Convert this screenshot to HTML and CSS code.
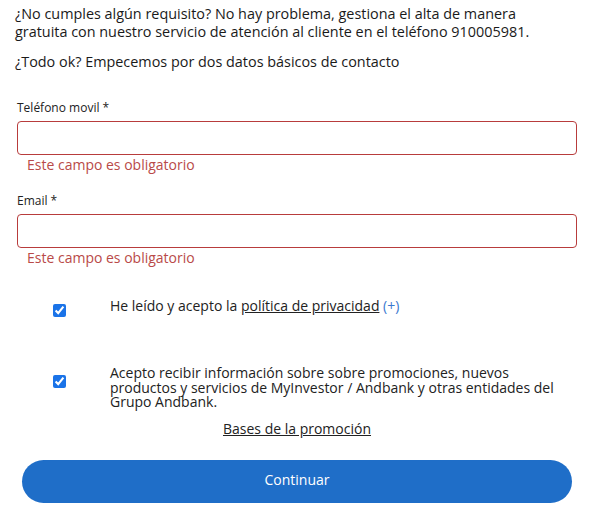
FILE: index.html
```html
<!DOCTYPE html>
<html lang="es">
<head>
<meta charset="utf-8">
<title>Alta</title>
<link rel="stylesheet" href="styles.css">
</head>
<body>
<main class="page">
  <p class="intro">¿No cumples algún requisito? No hay problema, gestiona el alta de manera gratuita con nuestro servicio de atención al cliente en el teléfono 910005981.</p>
  <p class="intro intro-second">¿Todo ok? Empecemos por dos datos básicos de contacto</p>

  <div class="field field-first">
    <label class="field-label" for="tel">Teléfono movil *</label>
    <input class="field-input" id="tel" type="tel">
    <div class="field-error">Este campo es obligatorio</div>
  </div>

  <div class="field">
    <label class="field-label" for="email">Email *</label>
    <input class="field-input" id="email" type="email">
    <div class="field-error">Este campo es obligatorio</div>
  </div>

  <div class="check-row check-row-privacy">
    <input class="check-box" type="checkbox" checked>
    <div class="check-text">He leído y acepto la <a class="link" href="#">política de privacidad</a> <span class="more">(+)</span></div>
  </div>

  <div class="check-row check-row-promo">
    <input class="check-box" type="checkbox" checked>
    <div class="check-text">Acepto recibir información sobre sobre promociones, nuevos productos y servicios de MyInvestor / Andbank y otras entidades del Grupo Andbank.</div>
  </div>

  <div class="bases"><a class="link" href="#">Bases de la promoción</a></div>

  <button class="btn" type="button">Continuar</button>
</main>
</body>
</html>
```
FILE: styles.css
```css
* { box-sizing: border-box; }
html, body { margin: 0; padding: 0; background: #fff; }
body {
  font-family: "Open Sans", "Noto Sans", sans-serif;
  font-size: 14px;
  color: #222;
}
.page {
  width: 577px;
  padding: 5px 0 0 15px;
}
.intro {
  margin: 0;
  max-width: 545px;
  font-size: 14.4px;
  line-height: 18px;
  color: #1a1a1a;
}
.intro-second {
  margin-top: 12px;
}
.field {
  margin-top: 17px;
  padding-left: 2px;
}
.field-first {
  margin-top: 28px;
}
.field-label {
  display: block;
  font-size: 12px;
  line-height: 17px;
  color: #222;
  margin-bottom: 5px;
}
.field-input {
  display: block;
  width: 560px;
  height: 34px;
  border: 1px solid #b83c3c;
  border-radius: 4px;
  background: #fff;
  font: inherit;
  padding: 0 10px;
  margin: 0;
}
.field-error {
  padding-left: 10px;
  line-height: 20px;
  color: #b94a48;
}
.check-row {
  display: flex;
  align-items: flex-start;
  padding-left: 38px;
}
.check-row-privacy { margin-top: 31px; }
.check-row-promo { margin-top: 49px; }
.check-box {
  width: 13px;
  height: 13px;
  margin: 5px 44px 0 0;
  flex: none;
  accent-color: #1a73e8;
}
.check-row-promo .check-box { margin-top: 9px; }
.check-text {
  line-height: 14.5px;
  color: #222;
}
.link {
  color: #222;
  text-decoration: underline;
}
.more { color: #3a78d0; }
.bases {
  text-align: center;
  line-height: 20px;
  margin-top: 9px;
  padding-left: 2px;
}
.btn {
  display: block;
  margin: 21px 0 0 7px;
  width: 550px;
  height: 43px;
  border: none;
  border-radius: 22px;
  background: #1f6ec8;
  color: #fff;
  font-family: inherit;
  font-size: 14px;
  font-weight: 500;
  padding: 0 0 3px;
}
```
